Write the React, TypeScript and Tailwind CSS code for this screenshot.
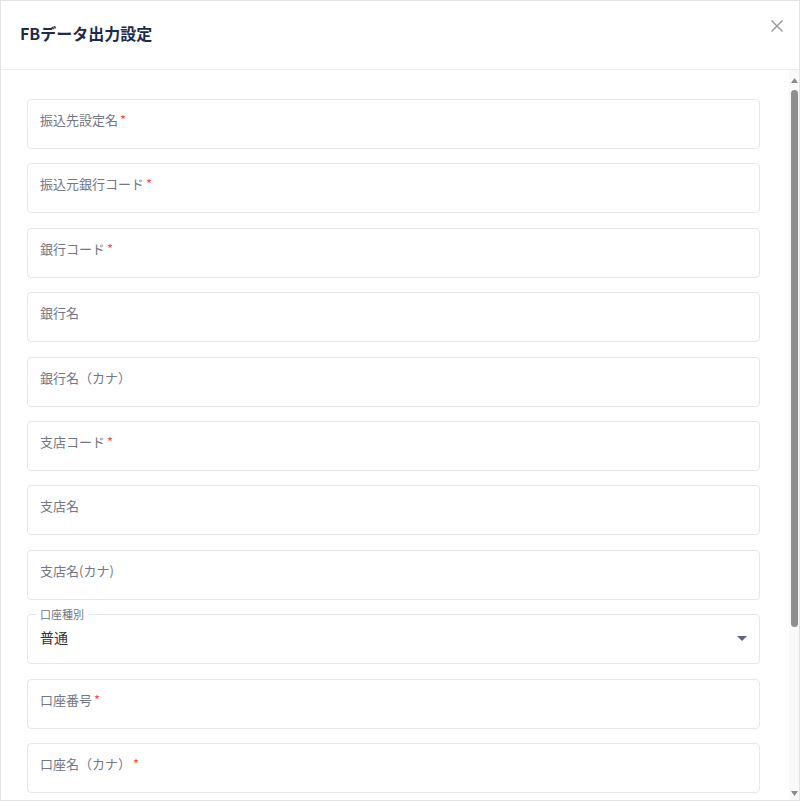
import React from "react";

const fields: { label: string; req?: boolean }[] = [
  { label: "振込先設定名", req: true },
  { label: "振込元銀行コード", req: true },
  { label: "銀行コード", req: true },
  { label: "銀行名" },
  { label: "銀行名（カナ）" },
  { label: "支店コード", req: true },
  { label: "支店名" },
  { label: "支店名(カナ)" },
];

function Field({ label, req }: { label: string; req?: boolean }) {
  return (
    <div className="h-[50px] shrink-0 rounded-[4px] border border-[#e4e6eb] bg-white flex items-center px-[12px] pb-[9px]">
      <span className="text-[13px] text-[#717785] leading-none">
        {label}
        {req && <span className="text-[#f0533f] ml-[2px]">*</span>}
      </span>
    </div>
  );
}

export default function App() {
  return (
    <div
      className="w-[800px] h-[801px] bg-white border border-[#e3e3e3] flex flex-col overflow-hidden"
      style={{ fontFamily: '"Noto Sans CJK JP", "Noto Sans", sans-serif' }}
    >
      <div className="h-[69px] shrink-0 border-b border-[#ececec] flex items-start justify-between pl-[19px] pr-[11px]">
        <h1 className="mt-[20px] text-[16px] font-bold text-[#1e2b4a] leading-[24px]">FBデータ出力設定</h1>
        <button className="mt-[14px] text-[#9a9a9a]">
          <svg width="22" height="22" viewBox="0 0 24 24" fill="none" stroke="currentColor" strokeWidth="1.6">
            <path d="M6 6l12 12M18 6L6 18" />
          </svg>
        </button>
      </div>
      <div className="flex-1 flex min-h-0">
        <div className="flex-1 overflow-hidden">
          <div className="flex flex-col gap-[14.4px] pl-[26px] pr-[29px] pt-[29px]">
            {fields.map((f) => (
              <Field key={f.label} label={f.label} req={f.req} />
            ))}
            <div className="relative h-[50px] shrink-0 rounded-[4px] border border-[#e4e6eb] bg-white flex items-center justify-between pl-[12px] pr-[12px] pb-[3px]">
              <span className="absolute -top-[8px] left-[8px] bg-white px-[4px] text-[11px] leading-[14px] text-[#717785]">口座種別</span>
              <span className="text-[14px] text-[#2b3344]">普通</span>
              <svg width="10" height="6" viewBox="0 0 10 6" className="mt-[2px]">
                <path d="M0 0h10L5 5z" fill="#5b6478" />
              </svg>
            </div>
            <Field label="口座番号" req />
            <Field label="口座名（カナ）" req />
          </div>
        </div>
        <div className="w-[10px] shrink-0 bg-[#f9f9f9] flex flex-col items-center pt-[8px] pb-[4px]">
          <svg width="7" height="5" viewBox="0 0 7 5">
            <path d="M0 5h7L3.5 0z" fill="#8a8a8a" />
          </svg>
          <div className="mt-[7px] h-[537px] w-[7px] rounded-[4px] bg-[#8f8f8f]" />
          <div className="flex-1" />
          <svg width="7" height="5" viewBox="0 0 7 5">
            <path d="M0 0h7L3.5 5z" fill="#8a8a8a" />
          </svg>
        </div>
      </div>
    </div>
  );
}
